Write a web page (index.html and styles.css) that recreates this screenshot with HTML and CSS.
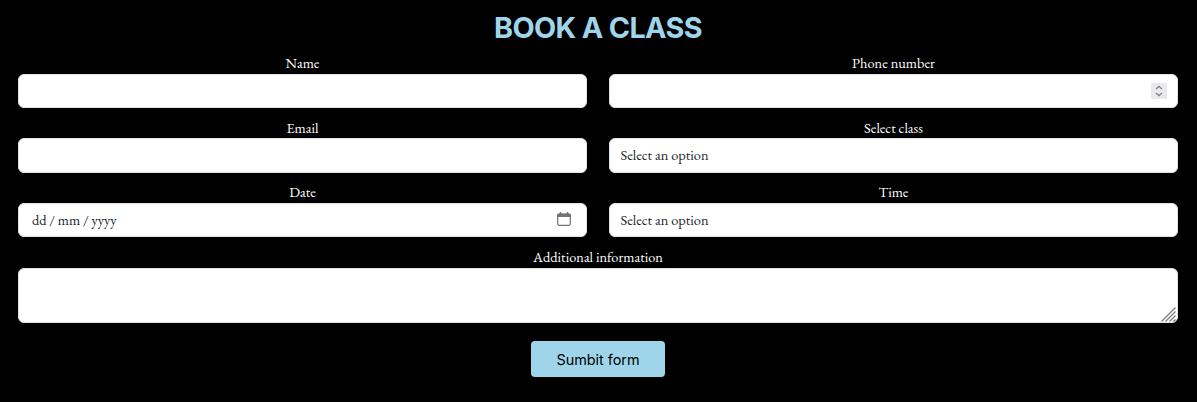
FILE: index.html
```html
<!DOCTYPE html>
<html lang="en">
<head>
<meta charset="utf-8">
<title>Book a class</title>
<link rel="stylesheet" href="styles.css">
</head>
<body>
<form class="booking">
  <h1 class="title">BOOK A CLASS</h1>
  <div class="grid">
    <div class="field">
      <label class="label" for="name">Name</label>
      <input class="control" id="name" type="text">
    </div>
    <div class="field">
      <label class="label" for="phone">Phone number</label>
      <div class="control control-number">
        <input class="bare" id="phone" type="text" inputmode="numeric">
        <svg class="spinner" width="16" height="16" viewBox="0 0 16 16"><path d="M5 6 8 3.400l3 2.600M5 10l3 2.600 3-2.600"/></svg>
      </div>
    </div>
    <div class="field">
      <label class="label" for="email">Email</label>
      <input class="control" id="email" type="email">
    </div>
    <div class="field">
      <label class="label" for="class">Select class</label>
      <div class="control" id="class" role="combobox" tabindex="0">Select an option</div>
    </div>
    <div class="field">
      <label class="label" for="date">Date</label>
      <div class="control control-date" id="date">
        <span class="date-mask">dd / mm / yyyy</span>
        <svg class="calendar" width="14" height="14" viewBox="0 0 14 14"><path class="calendar-box" d="M1.900 2.200h10.200q1.200 0 1.200 1.200v8.700q0 1.200-1.200 1.200H1.900Q.7 13.300.7 12.100V3.400q0-1.200 1.200-1.200z"/><path class="calendar-head" d="M1.500 1.700h11q1.300 0 1.300 1.300v2H.2V3q0-1.300 1.300-1.300zM2.700 0h1.500v3H2.700zM9.800 0h1.500v3H9.800z"/></svg>
      </div>
    </div>
    <div class="field">
      <label class="label" for="time">Time</label>
      <div class="control" id="time" role="combobox" tabindex="0">Select an option</div>
    </div>
    <div class="field field-wide">
      <label class="label" for="info">Additional information</label>
      <div class="control control-area">
        <textarea class="bare" id="info"></textarea>
        <svg class="grip" width="15" height="15" viewBox="0 0 15 15"><path d="M.5 14.500 14.500.5M4.500 14.500l10-10M8.500 14.500l6-6M12.500 14.500l2-2"/></svg>
      </div>
    </div>
  </div>
  <button class="submit" type="button">Sumbit form</button>
</form>
</body>
</html>
```
FILE: styles.css
```css
* { box-sizing: border-box; }
body {
  margin: 0;
  background: #000;
  font-family: "EB Garamond", "Liberation Serif", serif;
  font-size: 14.4px;
  color: #fff;
}
.booking {
  display: flex;
  flex-direction: column;
  align-items: center;
  height: 402px;
  padding: 9px 19px 0 18px;
}
.title {
  margin: 0;
  font: 700 28.8px/38px Inter, sans-serif;
  letter-spacing: -0.65px;
  color: #9fd5ea;
}
.grid {
  display: grid;
  grid-template-columns: 1fr 1fr;
  gap: 10.4px 22px;
  width: 100%;
  padding-top: 7px;
}
.field { display: flex; flex-direction: column; }
.field-wide { grid-column: 1 / 3; padding-top: 0.3px; }
.label {
  height: 19.8px;
  padding-top: 0.25px;
  line-height: 18px;
  text-align: center;
  white-space: nowrap;
}
.control {
  display: flex;
  align-items: center;
  width: 100%;
  height: 34.3px;
  padding: 0 11px 1px 10.5px;
  border: 1px solid #dee2e6;
  border-radius: 6px;
  background: #fff;
  color: #212529;
  font: inherit;
  outline: 0;
}
.bare {
  flex: 1;
  min-width: 0;
  height: 100%;
  padding: 0;
  border: 0;
  outline: 0;
  resize: none;
  background: none;
  font: inherit;
}
.control-number { padding: 0 10px 0 11px; }
.spinner {
  background: #e9e9ed;
  fill: none;
  stroke: #85858a;
  stroke-width: 1.3;
}
.control-date { justify-content: space-between; padding: 0 15px 1px 13px; }
.date-mask { letter-spacing: -0.05px; }
.calendar-box { fill: none; stroke: #737373; stroke-width: 1.2; }
.calendar-head { fill: #737373; }
.control-area { align-items: flex-end; height: 55.2px; padding: 0 1px 0 11px; }
.grip { fill: none; stroke: #777; stroke-width: 1.2; }
.submit {
  width: 134px;
  height: 36px;
  margin-top: 18px;
  padding: 1px 0 0;
  border: 0;
  border-radius: 4px;
  background: #9fd5ea;
  color: #000;
  font: 400 14.4px/36px Inter, sans-serif;
}
```
